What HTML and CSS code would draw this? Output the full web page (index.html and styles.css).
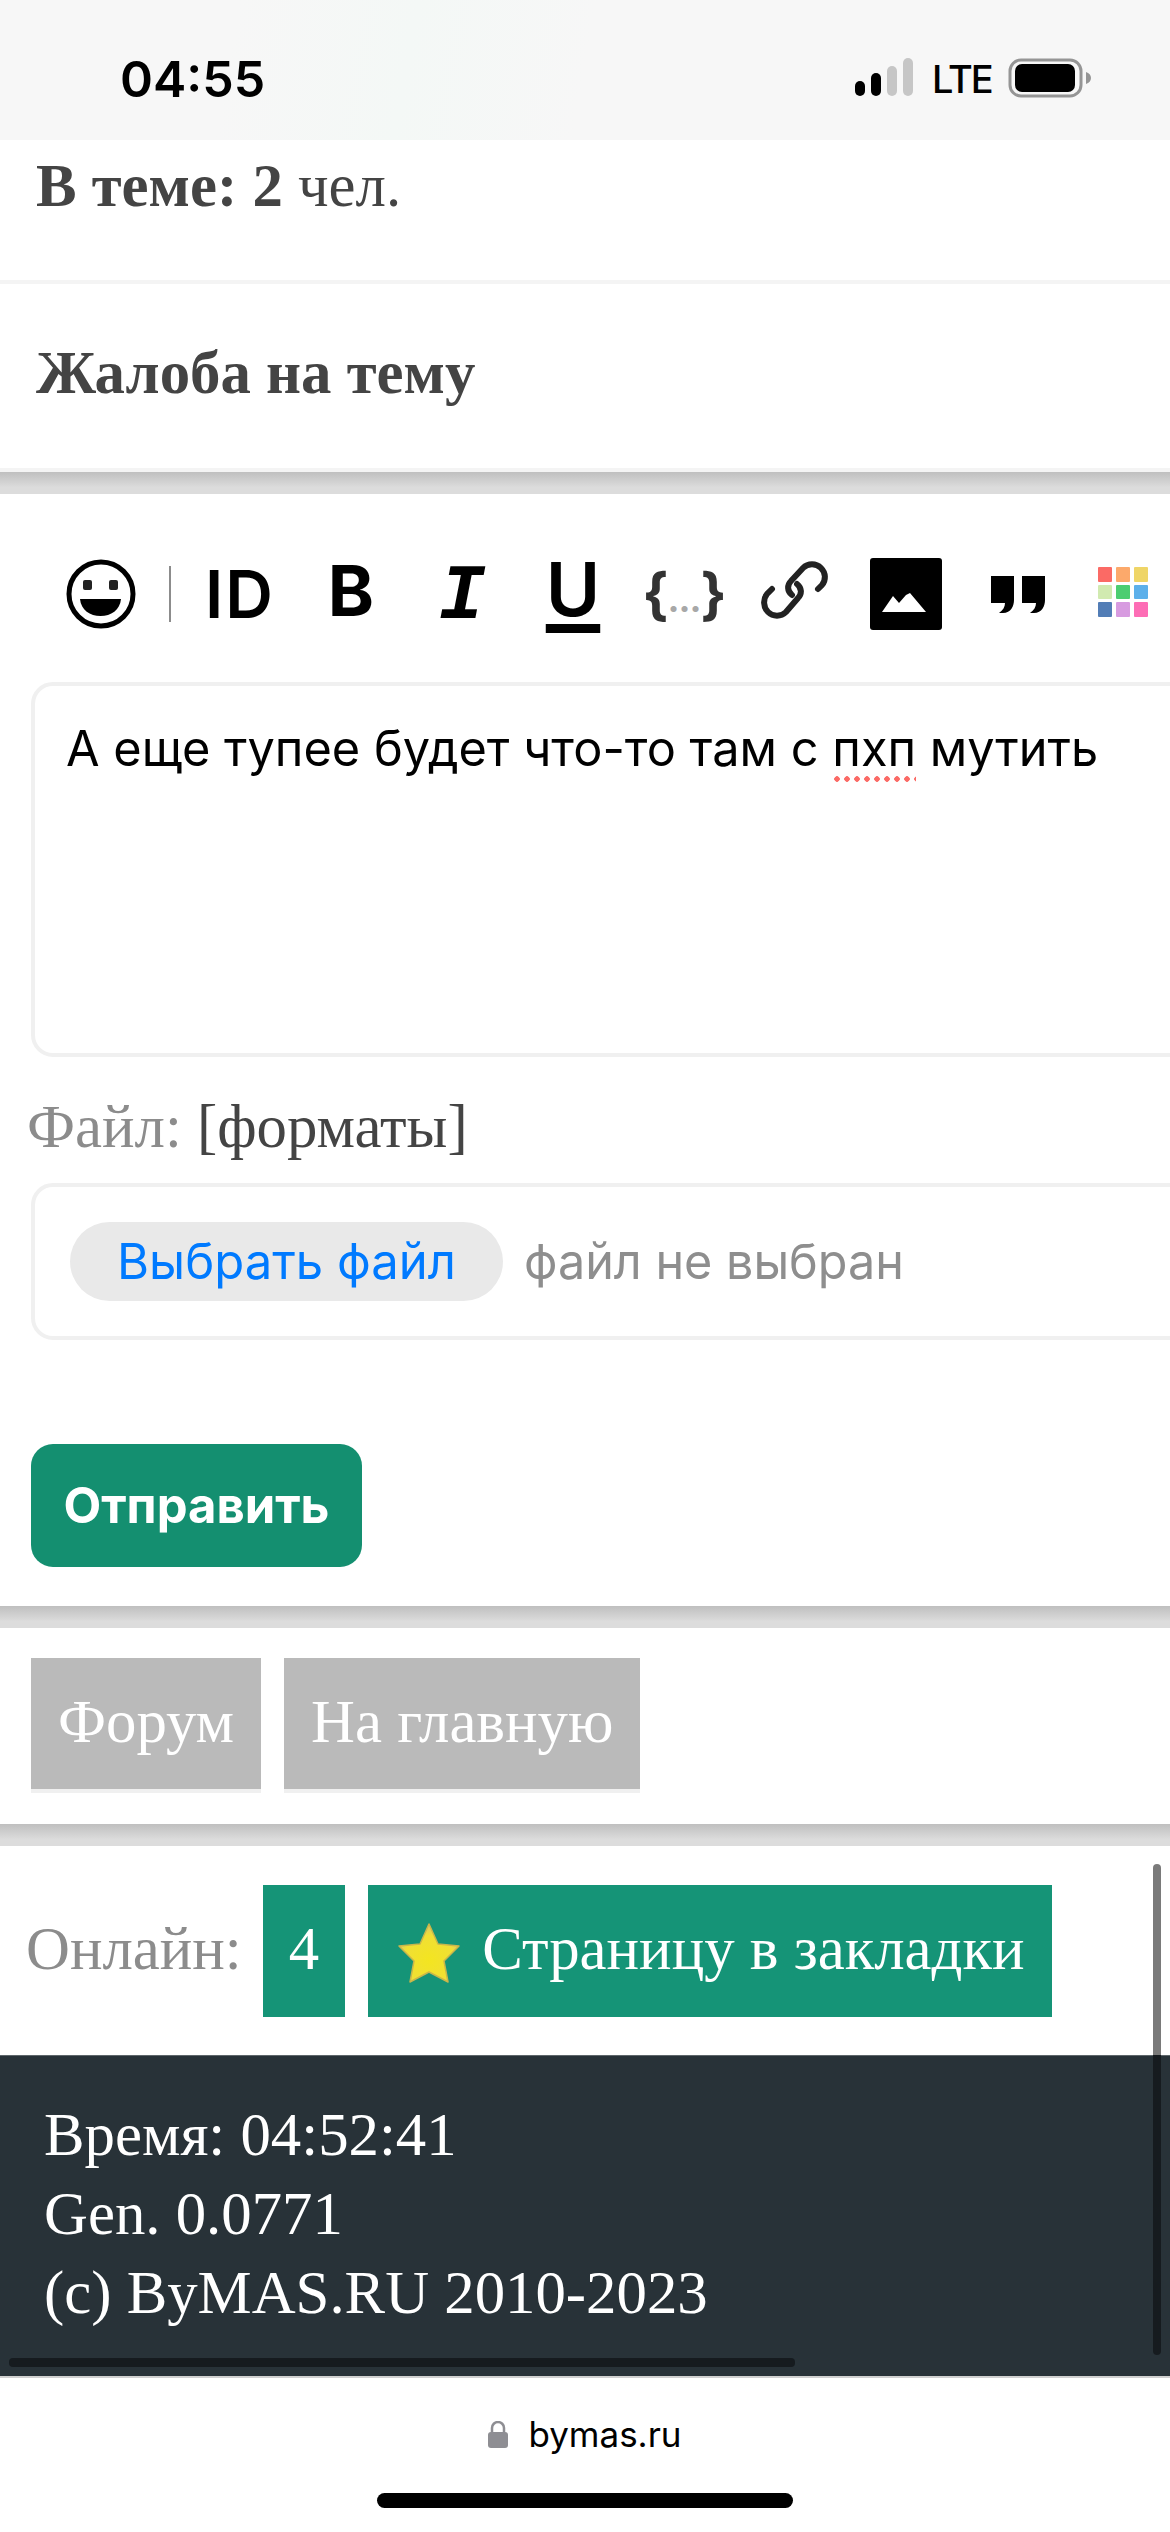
FILE: index.html
```html
<!DOCTYPE html>
<html lang="ru">
<head>
    <meta charset="UTF-8">
    <meta name="viewport" content="width=device-width, initial-scale=1.0">
    <title>bymas.ru</title>
    <link rel="stylesheet" href="styles.css">
</head>
<body>
    <div class="page">
        <div class="status-bar">
            <span class="clock">04:55</span>
            <div class="status-icons">
                <svg class="signal" width="58" height="38" viewBox="0 0 58 38">
                    <rect x="0" y="23" width="10" height="15" rx="5" fill="#000"/>
                    <rect x="16" y="15" width="10" height="23" rx="5" fill="#000"/>
                    <rect x="32" y="8" width="10" height="30" rx="5" fill="#c6c6c6"/>
                    <rect x="48" y="0" width="10" height="38" rx="5" fill="#c6c6c6"/>
                </svg>
                <span class="network">LTE</span>
                <svg class="battery" width="83" height="40" viewBox="0 0 83 40">
                    <rect x="2" y="2" width="71" height="36" rx="11" fill="none" stroke="#959595" stroke-width="3"/>
                    <rect x="7" y="6" width="60" height="28" rx="7" fill="#000"/>
                    <path d="M78 14c3 1 5 3 5 6s-2 5-5 6z" fill="#959595"/>
                </svg>
            </div>
        </div>

        <div class="topic-info"><b>В теме: 2</b> чел.</div>
        <div class="topic-report"><b>Жалоба на тему</b></div>
        <div class="gap"></div>

        <div class="editor">
            <div class="toolbar">
                <svg class="smile" width="72" height="72" viewBox="0 0 72 72">
                    <circle cx="36" cy="36" r="32" fill="none" stroke="#000" stroke-width="5"/>
                    <rect x="18" y="22" width="9" height="10" rx="2" fill="#222"/>
                    <rect x="44" y="22" width="9" height="10" rx="2" fill="#222"/>
                    <path d="M15 41h41c-1 11-10 17-20.500 17S16 52 15 41z" fill="#000"/>
                </svg>
                <span class="tool-divider"></span>
                <div class="tools">
                    <span class="tool tool-id">ID</span>
                    <span class="tool tool-b">B</span>
                    <span class="tool tool-i">I</span>
                    <span class="tool tool-u">U</span>
                    <span class="tool tool-code">{<i>...</i>}</span>
                    <span class="tool">
                        <svg width="72" height="72" viewBox="0 0 72 72" fill="none" stroke="#222" stroke-width="6" stroke-linecap="round">
                            <path d="M33 37c-5-4-5-10-1-14l12-13c5-5 13-5 18 0s5 12 1 17l-4 4"/>
                            <path d="M38 26c5 4 5 10 1 14L27 54c-5 5-13 5-18 0s-5-13-1-18l5-5"/>
                        </svg>
                    </span>
                    <span class="tool">
                        <svg width="72" height="72" viewBox="0 0 72 72">
                            <rect x="0" y="0" width="72" height="72" rx="3" fill="#000"/>
                            <path d="M12 54l11-16 6 7 7-8 4-2 16 19z" fill="#fff"/>
                        </svg>
                    </span>
                    <span class="tool">
                        <svg width="72" height="72" viewBox="0 0 72 72">
                            <path d="M10 18h23v24c0 6-3 13-11 13h-4c4-3 6-6 6-10h-14z" fill="#000"/>
                            <path d="M41 18h23v24c0 6-3 13-11 13h-4c4-3 6-6 6-10h-14z" fill="#000"/>
                        </svg>
                    </span>
                    <span class="tool">
                        <svg width="72" height="72" viewBox="0 0 72 72">
                            <rect x="6" y="9" width="14" height="15" rx="1" fill="#fb6a65"/>
                            <rect x="24" y="9" width="14" height="15" rx="1" fill="#fca96b"/>
                            <rect x="42" y="9" width="14" height="15" rx="1" fill="#efd567"/>
                            <rect x="6" y="27" width="14" height="14" rx="1" fill="#d1eab0"/>
                            <rect x="24" y="27" width="14" height="14" rx="1" fill="#4ccd71"/>
                            <rect x="42" y="27" width="14" height="14" rx="1" fill="#5db0ea"/>
                            <rect x="6" y="44" width="14" height="15" rx="1" fill="#527db6"/>
                            <rect x="24" y="44" width="14" height="15" rx="1" fill="#d79be0"/>
                            <rect x="42" y="44" width="14" height="15" rx="1" fill="#fd6db5"/>
                        </svg>
                    </span>
                </div>
            </div>

            <div class="message">А еще тупее будет что-то там с <span class="misspelled">пхп</span> мутить</div>

            <div class="file-label">Файл: <span class="file-formats">[форматы]</span></div>
            <div class="file-box">
                <span class="file-button">Выбрать файл</span>
                <span class="file-name">файл не выбран</span>
            </div>

            <button class="send-button">Отправить</button>
        </div>
        <div class="gap"></div>

        <div class="nav-links">
            <a class="nav-link">Форум</a>
            <a class="nav-link">На главную</a>
        </div>
        <div class="gap"></div>

        <div class="online-row">
            <span class="online-label">Онлайн:</span>
            <a class="green-link count-link">4</a>
            <a class="green-link">
                <svg class="star" width="64" height="60" viewBox="0 0 64 60">
                    <defs>
                        <radialGradient id="starFill" cx="50%" cy="62%" r="60%">
                            <stop offset="0" stop-color="#f3e520"/>
                            <stop offset="0.7" stop-color="#f0df35"/>
                            <stop offset="1" stop-color="#d9c56a"/>
                        </radialGradient>
                    </defs>
                    <path d="M32 1l9 20 21 2-15 15 4 21-19-10-19 10 4-21L2 23l21-2z" fill="url(#starFill)" stroke="#c9b64a" stroke-width="1.500" stroke-linejoin="round"/>
                </svg>
                Страницу в закладки
            </a>
        </div>

        <div class="footer">
            Время: 04:52:41<br>
            Gen. 0.0771<br>
            (c) ByMAS.RU 2010-2023
        </div>

        <div class="address-bar">
            <div class="address">
                <svg width="20" height="27" viewBox="0 0 20 27">
                    <path d="M4 12V7a6 6 0 0 1 12 0v5" fill="none" stroke="#8e8e93" stroke-width="2.500"/>
                    <rect x="0" y="11" width="20" height="16" rx="3" fill="#8e8e93"/>
                </svg>
                <span>bymas.ru</span>
            </div>
            <div class="home-indicator"></div>
        </div>

        <div class="scroll-v"></div>
        <div class="scroll-h"></div>
    </div>
</body>
</html>
```

FILE: styles.css
```css
body {
    margin: 0;
    background: #fff;
    font-family: "Liberation Serif", "Times New Roman", serif;
    font-size: 60.800px;
    color: #444;
}
.page {
    position: relative;
    width: 1170px;
    height: 2532px;
    overflow: hidden;
}
.status-bar {
    height: 140px;
    display: flex;
    justify-content: space-between;
    background: linear-gradient(100deg, #f7f7f7 20%, #f4f8f6 35%, #f7f7f7 50%);
    font-family: Inter, "Noto Sans", sans-serif;
    color: #000;
}
.clock {
    margin: 49px 0 0 120px;
    font-size: 50px;
    line-height: 60px;
    font-weight: 600;
}
.status-icons {
    display: flex;
    align-items: flex-start;
    margin: 58px 79px 0 0;
}
.signal {
    margin-right: 19px;
}
.network {
    width: 57px;
    margin: -3px 19px 0 0;
    font-size: 38px;
    line-height: 48px;
    font-weight: 500;
    letter-spacing: -2px;
}
.topic-info {
    height: 144px;
    padding: 14px 0 0 36px;
    box-sizing: border-box;
    border-bottom: 4px solid #f4f4f4;
    line-height: 64px;
}
.topic-report {
    height: 188px;
    padding: 57px 0 0 36px;
    box-sizing: border-box;
    border-bottom: 4px solid #f4f4f4;
    line-height: 64px;
}
.gap {
    height: 22px;
    background: linear-gradient(#bfbfbf, #dcdcdc 70%);
}
.editor {
    height: 1112px;
    padding: 64px 0 0 31px;
    box-sizing: border-box;
}
.toolbar {
    display: flex;
    align-items: center;
    height: 72px;
    margin-left: 34px;
}
.smile {
    margin-right: 32px;
}
.tool-divider {
    width: 2px;
    height: 56px;
    margin-right: 33px;
    background: #8c8c8c;
}
.tools {
    display: flex;
    gap: 39px;
}
.tool {
    display: flex;
    align-items: center;
    justify-content: center;
    flex: none;
    width: 72px;
    height: 72px;
    color: #000;
    font-family: Inter, "Noto Sans", sans-serif;
    font-weight: 600;
}
.tool-id {
    font-size: 66px;
    letter-spacing: 2px;
}
.tool-b {
    font-size: 70px;
    font-weight: 700;
    padding-bottom: 8px;
    box-sizing: border-box;
}
.tool-i {
    padding-top: 6px;
    box-sizing: border-box;
    font-family: "Liberation Mono", monospace;
    font-style: italic;
    font-weight: 700;
    font-size: 78px;
}
.tool-u {
    padding-bottom: 10px;
    box-sizing: border-box;
    font-size: 74px;
    font-weight: 600;
    text-decoration: underline;
    text-decoration-thickness: 9px;
    text-underline-offset: 8px;
    text-decoration-skip-ink: none;
}
.tool-code {
    font-size: 56px;
    font-weight: 700;
    color: #333;
    letter-spacing: -1px;
}
.tool-code i {
    font-style: normal;
    font-size: 36px;
    color: #a8a8a8;
    padding-top: 10px;
}
.message {
    width: 1300px;
    height: 375px;
    margin-top: 52px;
    padding: 33px 31px;
    box-sizing: border-box;
    border: 4px solid #f0f0f0;
    border-radius: 22px;
    font-family: Inter, "Noto Sans", sans-serif;
    font-size: 48.700px;
    line-height: 60px;
    color: #000;
}
.misspelled {
    padding-bottom: 4px;
    background: radial-gradient(circle, #fb6a65 2.500px, transparent 3px) left bottom / 10px 6px repeat-x;
}
.file-label {
    margin: 38px 0 0 -4px;
    line-height: 64px;
    color: #8c8c8c;
}
.file-formats {
    color: #444;
}
.file-box {
    display: flex;
    align-items: center;
    width: 1300px;
    height: 157px;
    margin-top: 24px;
    padding: 0 0 0 35px;
    box-sizing: border-box;
    border: 4px solid #f0f0f0;
    border-radius: 22px;
    font-family: Inter, "Noto Sans", sans-serif;
    font-size: 49px;
}
.file-button {
    display: flex;
    align-items: center;
    justify-content: center;
    width: 433px;
    height: 79px;
    border-radius: 40px;
    background: #e9e9e9;
    color: #007aff;
}
.file-name {
    margin-left: 21px;
    font-size: 48.500px;
    color: #8e8e8e;
}
.send-button {
    display: block;
    width: 331px;
    height: 123px;
    margin-top: 104px;
    border: 0;
    border-radius: 22px;
    background: #148f70;
    color: #fff;
    font-family: Inter, "Noto Sans", sans-serif;
    font-size: 49px;
    font-weight: 700;
}
.nav-links {
    display: flex;
    gap: 23px;
    height: 196px;
    padding: 30px 0 0 31px;
    box-sizing: border-box;
}
.nav-link {
    height: 135px;
    padding: 0 27px;
    box-sizing: border-box;
    border-bottom: 4px solid #f0f0f0;
    background: #bababa;
    color: #fff;
    line-height: 127px;
}
.online-row {
    display: flex;
    align-items: center;
    gap: 23px;
    height: 209px;
    padding: 39px 0 38px 26px;
    box-sizing: border-box;
}
.online-label {
    padding-bottom: 5px;
    margin-right: -2px;
    color: #8c8c8c;
}
.green-link {
    display: flex;
    align-items: center;
    height: 132px;
    padding: 0 27px 5px 29px;
    box-sizing: border-box;
    background: #159477;
    color: #fff;
    white-space: nowrap;
}
.count-link {
    padding: 0 26px 5px;
}
.star {
    margin: 8px 21px 0 0;
}
.footer {
    height: 321px;
    padding: 39px 0 0 44px;
    box-sizing: border-box;
    border-top: 1px solid #5e666a;
    background: #283238;
    color: #fff;
    line-height: 79px;
}
.address-bar {
    height: 156px;
    border-top: 2px solid #d0d0d0;
    box-sizing: border-box;
    background: #fff;
}
.address {
    display: flex;
    align-items: center;
    justify-content: center;
    gap: 20px;
    height: 40px;
    margin-top: 36px;
    font-family: Inter, "Noto Sans", sans-serif;
    font-size: 35px;
    color: #000;
}
.home-indicator {
    width: 416px;
    height: 15px;
    margin: 39px auto 0;
    border-radius: 8px;
    background: #000;
}
.scroll-v {
    position: absolute;
    top: 1864px;
    left: 1153px;
    width: 8px;
    height: 491px;
    border-radius: 4px;
    background: linear-gradient(#7a7a7a 38.900%, #161b1f 38.900%);
}
.scroll-h {
    position: absolute;
    top: 2358px;
    left: 9px;
    width: 786px;
    height: 9px;
    border-radius: 4px;
    background: #161b1f;
}
```
